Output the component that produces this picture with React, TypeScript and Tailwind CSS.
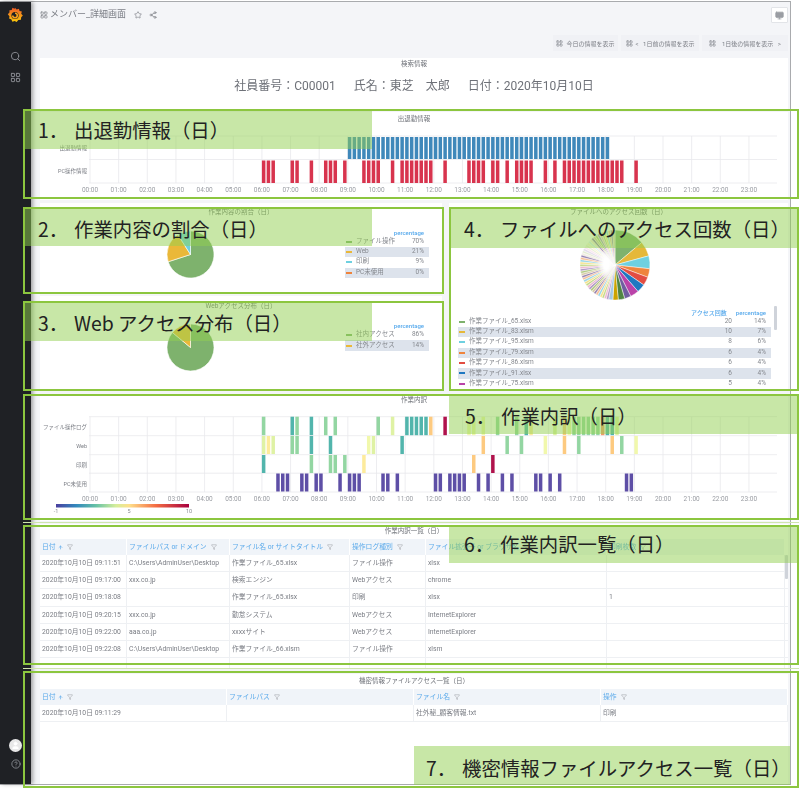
import { ArrowUp, CircleHelp, Filter, LayoutGrid, Monitor, Search, Share2, Star, User } from 'lucide-react';

const HOURS = Array.from({ length: 24 }, (_, i) => `${String(i).padStart(2, '0')}:00`);
const hourX = (h: number) => 50 + h * 28.65;
const slotX = (s: number) => 50 + s * 4.775;

const TEAL = '#52b5ac';
const GREEN = '#93d6a2';
const YGREEN = '#dff2a4';
const PALE = '#f1f8ac';
const YELLOW = '#fdeb9c';
const ORANGE = '#fdca80';
const CRIMSON = '#b0124c';
const PURPLE = '#5e4fa6';

const BLUE_SLOTS = Array.from({ length: 55 }, (_, i) => 54 + i);
const RED_SLOTS = [
  36, 37, 38, 42, 43, 46, 49, 50, 51, 53, 57, 58, 59, 60, 63, 65, 66, 67, 68, 69, 70, 71, 74, 79, 80, 81, 82, 84, 85, 87,
  89, 90, 91, 92, 95, 97, 99, 100, 101, 102, 103, 104, 105, 106, 107, 108, 109, 110, 111, 114,
];

const HEAT_ROWS: [number, string][][] = [
  [
    [36, GREEN], [42, TEAL], [43, GREEN], [46, TEAL], [49, GREEN], [51, GREEN], [60, GREEN], [63, YGREEN],
    [66, TEAL], [67, TEAL], [68, TEAL], [69, TEAL], [70, TEAL], [71, ORANGE], [74, CRIMSON], [79, PALE], [80, PALE],
    [82, PALE], [85, GREEN], [89, GREEN], [91, TEAL], [92, YELLOW], [97, YGREEN], [99, ORANGE], [100, PALE],
    [101, GREEN], [102, GREEN], [103, GREEN], [104, GREEN], [105, GREEN], [106, GREEN], [107, '#f49a6c'],
    [108, TEAL], [109, TEAL], [110, YGREEN],
  ],
  [
    [36, YGREEN], [37, YELLOW], [38, YGREEN], [42, GREEN], [43, GREEN], [46, TEAL], [50, TEAL], [58, PALE], [59, YGREEN],
    [65, TEAL], [82, ORANGE], [87, GREEN], [90, GREEN], [95, PALE], [99, ORANGE], [102, GREEN], [109, ORANGE],
    [111, GREEN], [114, PALE],
  ],
  [[36, TEAL], [46, GREEN], [50, GREEN], [51, GREEN], [53, GREEN], [57, YELLOW], [80, ORANGE], [84, CRIMSON]],
  [39, 40, 41, 44, 45, 47, 48, 52, 54, 55, 56, 61, 62, 64, 72, 73, 75, 76, 77, 78, 81, 83, 86, 88, 93, 94, 96, 98, 112, 113].map(
    (s): [number, string] => [s, PURPLE],
  ),
];

function PanelTitle({ children, height }: { children: string; height: string }) {
  return <div className={`${height} flex items-center justify-center text-[6.5px] text-[#6e7178]`}>{children}</div>;
}

function Axis({ top }: { top: number }) {
  return (
    <>
      {HOURS.map((h, i) => (
        <text key={h} x={hourX(i)} y={top} textAnchor="middle" fontSize="6.5" fill="#9a9da3">
          {h}
        </text>
      ))}
    </>
  );
}

function GridLines({ y1, y2, rows }: { y1: number; y2: number; rows: number[] }) {
  return (
    <>
      {HOURS.map((h, i) => (
        <line key={h} x1={hourX(i)} x2={hourX(i)} y1={y1} y2={y2} stroke="#e8e9ec" strokeWidth="0.8" />
      ))}
      {rows.map((y) => (
        <line key={y} x1="49" x2="737" y1={y} y2={y} stroke="#e8e9ec" strokeWidth="0.8" />
      ))}
    </>
  );
}

function AttendanceChart() {
  return (
    <svg width="748" height="66" className="block mt-[6px]">
      <GridLines y1={2} y2={49} rows={[2, 25.5, 49]} />
      {BLUE_SLOTS.map((s) => (
        <rect key={s} x={slotX(s)} y="3" width="3.5" height="22" fill="#3f88ba" />
      ))}
      {RED_SLOTS.map((s) => (
        <rect key={s} x={slotX(s)} y="26.5" width="3.5" height="22.5" fill="#d8344e" />
      ))}
      <text x="47" y="16" textAnchor="end" fontSize="5.5" fill="#7b7e85">出退勤情報</text>
      <text x="47" y="39" textAnchor="end" fontSize="5.5" fill="#7b7e85">PC操作情報</text>
      <Axis top={58} />
    </svg>
  );
}

function HeatChart() {
  const labels = ['ファイル操作ログ', 'Web', '印刷', 'PC未使用'];
  const rowTop = [2.7, 22, 41, 59.5];
  return (
    <svg width="748" height="104" className="block mt-[6px]">
      <defs>
        <linearGradient id="spectral">
          <stop offset="0" stopColor="#4a3f9f" />
          <stop offset="0.15" stopColor="#3288bd" />
          <stop offset="0.3" stopColor="#66c2a5" />
          <stop offset="0.45" stopColor="#d5ee9b" />
          <stop offset="0.55" stopColor="#fee08b" />
          <stop offset="0.75" stopColor="#f46d43" />
          <stop offset="1" stopColor="#a8003f" />
        </linearGradient>
      </defs>
      <GridLines y1={2.7} y2={78} rows={[2.7, 21.7, 40.7, 59.2, 78]} />
      {HEAT_ROWS.map((row, r) =>
        row.map(([s, color]) => (
          <rect key={`${r}-${s}`} x={slotX(s)} y={rowTop[r]} width="3.5" height={r === 0 ? 18.5 : 18} fill={color} />
        )),
      )}
      {labels.map((l, i) => (
        <text key={l} x="47" y={rowTop[i] + 12} textAnchor="end" fontSize="5.5" fill="#7b7e85">
          {l}
        </text>
      ))}
      <Axis top={87} />
      <rect x="16" y="90" width="133" height="3.5" fill="url(#spectral)" />
      <text x="16" y="99" textAnchor="middle" fontSize="5.5" fill="#8a8d93">-1</text>
      <text x="89" y="99" textAnchor="middle" fontSize="5.5" fill="#8a8d93">5</text>
      <text x="149" y="99" textAnchor="middle" fontSize="5.5" fill="#8a8d93">10</text>
    </svg>
  );
}

type Slice = { value: number; color: string; opacity?: number };

function Pie({ r, slices, strokeWidth = 0.6, fade = false }: { r: number; slices: Slice[]; strokeWidth?: number; fade?: boolean }) {
  const total = slices.reduce((sum, s) => sum + s.value, 0);
  let acc = 0;
  const pt = (a: number) => [r + 1 + r * Math.sin(a * 2 * Math.PI), r + 1 - r * Math.cos(a * 2 * Math.PI)];
  return (
    <svg width={r * 2 + 2} height={r * 2 + 2} className="block">
      <defs>
        <radialGradient id="pieFade">
          <stop offset="0.3" stopColor="#fff" stopOpacity="1" />
          <stop offset="1" stopColor="#fff" stopOpacity="0" />
        </radialGradient>
      </defs>
      {slices.map((s, i) => {
        const start = acc / total;
        acc += s.value;
        const end = acc / total;
        const [x1, y1] = pt(start);
        const [x2, y2] = pt(end);
        return (
          <path
            key={i}
            d={`M${r + 1} ${r + 1}L${x1} ${y1}A${r} ${r} 0 ${end - start > 0.5 ? 1 : 0} 1 ${x2} ${y2}Z`}
            fill={s.color}
            fillOpacity={s.opacity ?? 1}
            stroke="#fff"
            strokeWidth={strokeWidth}
          />
        );
      })}
      {fade && <path d={`M${r + 1} ${r * 0.5}A${r * 0.5} ${r * 0.5} 0 0 0 ${r + 1} ${r * 1.5}Z`} fill="url(#pieFade)" />}
    </svg>
  );
}

const PALETTE = ['#a78cc0', '#eab0cc', '#bcd47c', '#f3df80', '#8ed0e4', '#f5b98c', '#8f78a8', '#d4c4a0', '#a8c474'];
const FILE_SLICES: Slice[] = [
  { value: 14, color: '#7eb26d' },
  { value: 7, color: '#e5b83a' },
  { value: 6, color: '#6ed0e0' },
  { value: 4, color: '#ef843c' },
  { value: 4, color: '#e24d42' },
  { value: 4, color: '#1f78c1' },
  { value: 4, color: '#ba43a9' },
  { value: 3, color: '#705da0' },
  { value: 3, color: '#508642' },
  { value: 2.5, color: '#cca300' },
  { value: 2, color: '#9ac3e0', opacity: 0.9 },
  ...Array.from({ length: 44 }, (_, i) => ({ value: 1.08, color: PALETTE[i % PALETTE.length], opacity: i > 24 && i < 33 ? 0.3 : 0.9 })),
];

function LegendRow({ color, name, values, shaded }: { color: string; name: string; values: string[]; shaded: boolean }) {
  return (
    <div className={`h-[10.35px] flex items-center text-[6.5px] text-[#85888e] ${shaded ? 'bg-[#dde3ec]' : ''}`}>
      <span className="w-[6px] h-[2px] ml-[1px] mr-[4px]" style={{ backgroundColor: color }} />
      <span className="flex-1 whitespace-nowrap">{name}</span>
      {values.map((v, i) => (
        <span key={i} className={`text-right pr-[5px] ${i === values.length - 1 ? 'w-[34px]' : 'w-[30px]'}`}>
          {v}
        </span>
      ))}
    </div>
  );
}

function LegendHead({ labels }: { labels: string[] }) {
  return (
    <div className="h-[9px] flex justify-end items-center text-[6px] text-[#56a9ec] font-medium">
      {labels.map((l) => (
        <span key={l} className="ml-[4px] pr-[5px] text-right whitespace-nowrap">
          {l}
        </span>
      ))}
    </div>
  );
}

function HeadCell({ label, sort }: { label: string; sort?: boolean }) {
  return (
    <div className="flex items-center gap-[2px] bg-[#f0f4f9] pl-[2px] mr-[1px] text-[6.8px] text-[#5aa9ea] whitespace-nowrap overflow-hidden">
      <span>{label}</span>
      {sort && <ArrowUp size={5} strokeWidth={3} className="text-[#5aa9ea]" />}
      <Filter size={6} className="text-[#9a9da3] ml-[2px]" />
    </div>
  );
}

function DataTable({ cols, head, rows }: { cols: string; head: string[]; rows: string[][] }) {
  return (
    <div className="text-[6.8px] text-[#7b7e85]">
      <div className={`grid h-[16px] ${cols}`}>
        {head.map((h, i) => (
          <HeadCell key={h} label={h} sort={i === 0} />
        ))}
      </div>
      {rows.map((row, r) => (
        <div key={r} className={`grid h-[17.2px] border-b border-[#eef0f3] ${cols}`}>
          {row.map((c, i) => (
            <div key={i} className="flex items-center pl-[2px] border-r border-[#eef0f3] whitespace-nowrap overflow-hidden">
              {c}
            </div>
          ))}
        </div>
      ))}
    </div>
  );
}

const WORK_ROWS = [
  ['2020年10月10日 09:11:51', 'C:\\Users\\AdminUser\\Desktop', '作業ファイル_65.xlsx', 'ファイル操作', 'xlsx', ''],
  ['2020年10月10日 09:17:00', 'xxx.co.jp', '検索エンジン', 'Webアクセス', 'chrome', ''],
  ['2020年10月10日 09:18:08', '', '作業ファイル_65.xlsx', '印刷', 'xlsx', '1'],
  ['2020年10月10日 09:20:15', 'xxx.co.jp', '勤怠システム', 'Webアクセス', 'InternetExplorer', ''],
  ['2020年10月10日 09:22:00', 'aaa.co.jp', 'xxxxサイト', 'Webアクセス', 'InternetExplorer', ''],
  ['2020年10月10日 09:22:08', 'C:\\Users\\AdminUser\\Desktop', '作業ファイル_66.xlsm', 'ファイル操作', 'xlsm', ''],
  ['', '', '', '', '', ''],
];

const FILE_ROWS: [string, string, string, string][] = [
  ['#7eb26d', '作業ファイル_65.xlsx', '20', '14%'],
  ['#e5b83a', '作業ファイル_83.xlsm', '10', '7%'],
  ['#6ed0e0', '作業ファイル_95.xlsm', '8', '6%'],
  ['#ef843c', '作業ファイル_79.xlsm', '6', '4%'],
  ['#e24d42', '作業ファイル_86.xlsm', '6', '4%'],
  ['#1f78c1', '作業ファイル_91.xlsx', '6', '4%'],
  ['#ba43a9', '作業ファイル_75.xlsm', '5', '4%'],
];

function GrafanaLogo() {
  return (
    <svg width="16" height="17" viewBox="0 0 24 26">
      <defs>
        <linearGradient id="gf" x1="0" y1="1" x2="0" y2="0">
          <stop offset="0" stopColor="#fbca0a" />
          <stop offset="1" stopColor="#f05a28" />
        </linearGradient>
      </defs>
      <path
        fill="url(#gf)"
        d="M12 1l2.500 3 3.500-1.500 1 3.500 3.500 1-1 3.500 2.500 2.500-2.500 2.500-.5 4-4 .5-2.500 3-3-1.500-3.500 1-1.500-3.500-3.500-1.500 .5-3.500-2.500-3 2.500-2.500 0-3.500 3.500-.5 1-3.500 3.500 1.500z"
      />
      <circle cx="12" cy="13" r="5.500" fill="#1f2125" />
      <path d="M12 9.500a3.500 3.500 0 1 1-3.500 3.500" fill="none" stroke="#f8a01a" strokeWidth="2.500" />
    </svg>
  );
}

function Sidebar() {
  return (
    <aside className="w-[31px] shrink-0 bg-[#1f2125] flex flex-col items-center text-[#8e9197] shadow-[2px_0_4px_rgba(0,0,0,0.35)] z-10">
      <div className="mt-[5px] mr-[1px]">
        <GrafanaLogo />
      </div>
      <Search size={11} className="mt-[27px]" />
      <LayoutGrid size={11} className="mt-[10px]" />
      <div className="mt-auto w-[13px] h-[13px] rounded-full bg-[#e8e8e8] flex items-center justify-center">
        <User size={9} fill="#fff" className="text-white" />
      </div>
      <CircleHelp size={10} className="mt-[7px] mb-[15px]" />
    </aside>
  );
}

function ToolButton({ label, width }: { label: string; width: string }) {
  return (
    <div className={`h-[16px] ${width} bg-[#f0f1f5] flex items-center justify-center gap-[3px] text-[6px] text-[#7b7e85] whitespace-pre`}>
      <LayoutGrid size={7} />
      <span>{label}</span>
    </div>
  );
}

function Dashboard() {
  return (
    <main className="flex-1 min-w-0 bg-[#f4f5f8] pl-[9px] pr-[2px] flex flex-col">
      <header className="h-[30px] flex items-center text-[#7b7e85]">
        <div className="flex items-center mt-[-5px]">
          <LayoutGrid size={8} className="mr-[2px]" />
          <span className="text-[9px]">メンバー_詳細画面</span>
          <Star size={8} className="ml-[8px]" />
          <Share2 size={8} className="ml-[7px]" />
        </div>
        <div className="ml-auto w-[17px] h-[16px] mt-[-4px] bg-white border border-[#e2e4e8] rounded-[1px] flex items-center justify-center">
          <Monitor size={9} fill="#9a9da3" className="text-[#9a9da3]" />
        </div>
      </header>

      <div className="flex justify-end gap-[3px] mt-[3px]">
        <ToolButton label="今日の情報を表示" width="w-[65px]" />
        <ToolButton label="<   1日前の情報を表示" width="w-[78px]" />
        <ToolButton label="  1日後の情報を表示   >" width="w-[86px]" />
      </div>

      <section className="mt-[7px] h-[52px] bg-white">
        <PanelTitle height="h-[14px]">検索情報</PanelTitle>
        <div className="mt-[5px] flex justify-center text-[12px] text-[#6e7178] whitespace-nowrap gap-[18px]">
          <span>社員番号：C00001</span>
          <span>氏名：東芝　太郎</span>
          <span>日付：2020年10月10日</span>
        </div>
      </section>

      <section className="mt-[2px] h-[88px] bg-white">
        <PanelTitle height="h-[16px]">出退勤情報</PanelTitle>
        <AttendanceChart />
      </section>

      <div className="mt-[3px] h-[188px] grid grid-cols-[402px_339px] gap-x-[7px]">
        <div className="flex flex-col gap-[3px]">
          <section className="h-[90px] bg-white">
            <PanelTitle height="h-[20px]">作業内容の割合（日）</PanelTitle>
            <div className="flex">
              <div className="ml-[126px] mt-[7px]">
                <Pie
                  r={23.5}
                  slices={[
                    { value: 70, color: '#7eb26d' },
                    { value: 21, color: '#eab839' },
                    { value: 9, color: '#6ed0e0' },
                  ]}
                />
              </div>
              <div className="ml-[130px] w-[84px] mt-[4.5px]">
                <LegendHead labels={['percentage']} />
                <LegendRow color="#7eb26d" name="ファイル操作" values={['70%']} shaded={false} />
                <LegendRow color="#eab839" name="Web" values={['21%']} shaded />
                <LegendRow color="#6ed0e0" name="印刷" values={['9%']} shaded={false} />
                <LegendRow color="#ef843c" name="PC未使用" values={['0%']} shaded />
              </div>
            </div>
          </section>
          <section className="flex-1 bg-white">
            <PanelTitle height="h-[22px]">Webアクセス分布（日）</PanelTitle>
            <div className="flex">
              <div className="ml-[126px] mt-[5px]">
                <Pie
                  r={23.5}
                  slices={[
                    { value: 86, color: '#7eb26d' },
                    { value: 14, color: '#eab839' },
                  ]}
                />
              </div>
              <div className="ml-[130px] w-[84px] mt-[3px]">
                <LegendHead labels={['percentage']} />
                <LegendRow color="#7eb26d" name="社内アクセス" values={['86%']} shaded={false} />
                <LegendRow color="#eab839" name="社外アクセス" values={['14%']} shaded />
              </div>
            </div>
          </section>
        </div>

        <section className="bg-white overflow-hidden">
          <PanelTitle height="h-[20px]">ファイルへのアクセス回数（日）</PanelTitle>
          <div className="flex justify-center mt-[6px] ml-[-8px]">
            <Pie r={35} slices={FILE_SLICES} strokeWidth={0.45} fade />
          </div>
          <div className="flex ml-[9px] mt-[6.5px]">
            <div className="w-[313px]">
              <LegendHead labels={['アクセス回数', 'percentage']} />
              {FILE_ROWS.map(([color, name, count, pct], i) => (
                <LegendRow key={name} color={color} name={name} values={[count, pct]} shaded={i % 2 === 1} />
              ))}
            </div>
            <div className="ml-[3px] mt-[-2px] w-[3px] h-[24px] bg-[#cfd3da] rounded-[1px]" />
          </div>
        </section>
      </div>

      <section className="mt-[3px] h-[127px] bg-white">
        <PanelTitle height="h-[14px]">作業内訳</PanelTitle>
        <HeatChart />
      </section>

      <section className="mt-[3px] h-[144px] bg-white overflow-hidden relative">
        <PanelTitle height="h-[15px]">作業内訳一覧（日）</PanelTitle>
        <DataTable
          cols="grid-cols-[87px_103px_120px_76px_181px_178px]"
          head={['日付', 'ファイルパス or ドメイン', 'ファイル名 or サイトタイトル', '操作ログ種別', 'ファイル拡張子 or ブラウザ名', '印刷枚数']}
          rows={WORK_ROWS}
        />
        <div className="absolute right-0 top-[31px] w-[3px] h-[24px] bg-[#cfd3da] rounded-[1px]" />
      </section>

      <section className="mt-[6px] flex-1 bg-white">
        <PanelTitle height="h-[15px]">機密情報ファイルアクセス一覧（日）</PanelTitle>
        <DataTable
          cols="grid-cols-[187px_187px_187px_187px]"
          head={['日付', 'ファイルパス', 'ファイル名', '操作']}
          rows={[['2020年10月10日 09:11:29', '', '社外秘_顧客情報.txt', '印刷']]}
        />
      </section>
    </main>
  );
}

type Note = {
  num: string;
  label: string;
  box: string;
  band: string;
  text: string;
};

const NOTES: Note[] = [
  { num: '1．', label: '出退勤情報（日）', box: 'left-[23px] top-[109px] w-[776px] h-[90px]', band: 'left-[23px] top-[110px] w-[349px] h-[39px]', text: 'left-[38px] top-[116px]' },
  { num: '2．', label: '作業内容の割合（日）', box: 'left-[23px] top-[207px] w-[421px] h-[87px]', band: 'left-[23px] top-[208px] w-[349px] h-[38px]', text: 'left-[38px] top-[215px]' },
  { num: '3．', label: 'Web アクセス分布（日）', box: 'left-[23px] top-[301px] w-[421px] h-[90px]', band: 'left-[23px] top-[302px] w-[349px] h-[39px]', text: 'left-[38px] top-[309px]' },
  { num: '4．', label: 'ファイルへのアクセス回数（日）', box: 'left-[449px] top-[207px] w-[350px] h-[184px]', band: 'left-[450px] top-[208px] w-[349px] h-[40px]', text: 'left-[464px] top-[215px]' },
  { num: '5．', label: '作業内訳（日）', box: 'left-[23px] top-[394px] w-[776px] h-[126px]', band: 'left-[449px] top-[395px] w-[350px] h-[39px]', text: 'left-[465px] top-[402px]' },
  { num: '6．', label: '作業内訳一覧（日）', box: 'left-[23px] top-[525px] w-[776px] h-[140px]', band: 'left-[449px] top-[525px] w-[350px] h-[38px]', text: 'left-[464px] top-[530px]' },
  { num: '7．', label: '機密情報ファイルアクセス一覧（日）', box: 'left-[23px] top-[671px] w-[776px] h-[117px]', band: 'left-[414px] top-[746px] w-[376px] h-[39px]', text: 'left-[426px] top-[754px]' },
];

export default function App() {
  return (
    <div className="relative w-[800px] h-[789px] bg-white overflow-hidden font-[Roboto,'Noto_Sans_CJK_JP',sans-serif]">
      <div className="w-[791px] h-[784px] mt-[1px] border-t border-r border-b border-[#a9abae] flex blur-[0.35px]">
        <Sidebar />
        <Dashboard />
      </div>

      {NOTES.map((n) => (
        <div key={n.num}>
          <div className={`absolute bg-[#92d050]/50 ${n.band}`} />
          <div className={`absolute border-2 border-[#8cc63f] ${n.box}`} />
          <div className={`absolute flex text-[19.4px] leading-[28px] text-[#222] whitespace-nowrap font-['Noto_Sans_CJK_JP',sans-serif] ${n.text}`}>
            <span className="w-[36px]">{n.num}</span>
            <span>{n.label}</span>
          </div>
        </div>
      ))}
      <div className="absolute left-[23px] top-[522px] w-[776px] h-[1px] bg-[#cfe6ad]" />
      <div className="absolute left-[23px] top-[668px] w-[776px] h-[1px] bg-[#cfe6ad]" />
    </div>
  );
}
